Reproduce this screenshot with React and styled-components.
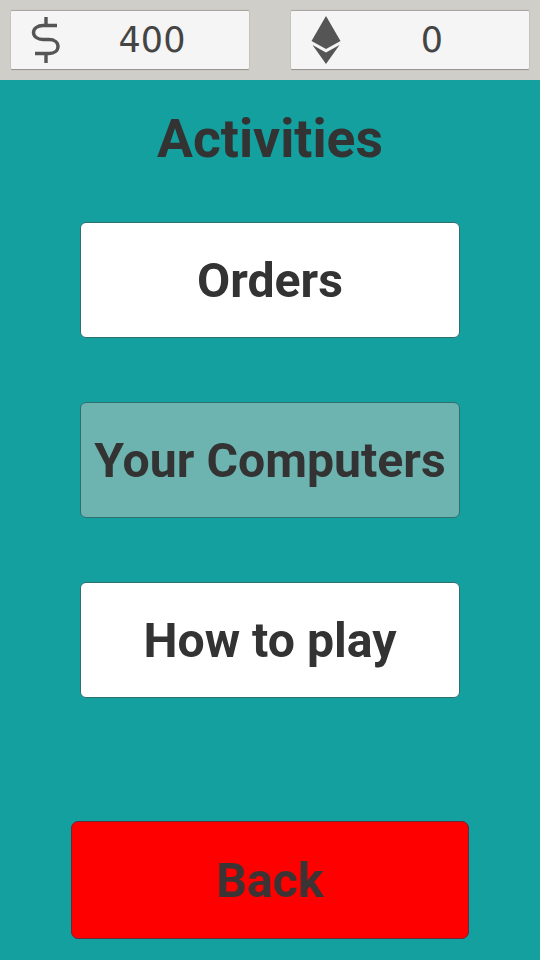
import styled, { createGlobalStyle } from "styled-components";
import React from "react";

const GlobalStyle = createGlobalStyle`
    html, body {
        margin: 0;
        padding: 0;
    }
`

export default function App() {
    return (
        <Screen>
            <GlobalStyle />
            <TopBar>
                <Counter>
                    <CounterIcon>
                        <svg width="32" height="48" viewBox="0 0 32 48" fill="none" stroke="#555555" strokeWidth="3.4">
                            <path d="M16 1v8.500M16 37.500V47" />
                            <path d="M27 9.500H13C7.500 9.500 3.500 12.500 3.500 16.500S7.500 23.500 13 23.500h6C24.500 23.500 28 26.500 28 30.500S24.500 37.500 19 37.500H5" />
                        </svg>
                    </CounterIcon>
                    <CounterValue>400</CounterValue>
                </Counter>
                <Counter>
                    <CounterIcon>
                        <svg width="32" height="48" viewBox="0 0 32 48" fill="#555555">
                            <path d="M16 0L30.500 25L16 33L1.500 25Z" />
                            <path d="M2.500 29L16 36.500L29.500 29L16 48Z" />
                        </svg>
                    </CounterIcon>
                    <CounterValue>0</CounterValue>
                </Counter>
            </TopBar>
            <Content>
                <Title>Activities</Title>
                <Menu>
                    <MenuButton>Orders</MenuButton>
                    <MenuButton disabled>Your Computers</MenuButton>
                    <MenuButton>How to play</MenuButton>
                </Menu>
                <BackButton>Back</BackButton>
            </Content>
        </Screen>
    )
}

const Screen = styled.div`

    width: 540px;
    height: 960px;
    display: flex;
    flex-direction: column;
    background-color: #13a09e;
    font-family: Roboto, "Liberation Sans", sans-serif;
    overflow: hidden;

`

const TopBar = styled.div`

    height: 80px;
    box-sizing: border-box;
    padding: 11px;
    display: flex;
    justify-content: space-between;
    background-color: #cfcec8;

`

const Counter = styled.div`

    width: 238px;
    height: 58px;
    box-sizing: border-box;
    display: flex;
    align-items: center;
    background-color: #f5f5f5;
    border-radius: 1px;
    box-shadow: 0 1px 1px rgba(0, 0, 0, 0.3), 0 -1px 1px rgba(0, 0, 0, 0.2);

`

const CounterIcon = styled.div`

    width: 32px;
    height: 48px;
    margin-left: 19px;
    flex-shrink: 0;

`

const CounterValue = styled.span`

    flex: 1;
    padding-right: 7px;
    text-align: center;
    font-family: "DejaVu Sans", sans-serif;
    font-size: 35px;
    color: #444444;

`

const Content = styled.div`

    flex: 1;
    display: flex;
    flex-direction: column;
    align-items: center;

`

const Title = styled.h1`

    margin: 28px 0 0;
    height: 62px;
    line-height: 62px;
    font-size: 53.5px;
    font-weight: 700;
    color: #333333;

`

const Menu = styled.div`

    margin-top: 52px;
    display: flex;
    flex-direction: column;
    gap: 64px;

`

const MenuButton = styled.button`

    width: 380px;
    height: 116px;
    box-sizing: border-box;
    padding: 0;
    border: 1px solid #2c7070;
    border-radius: 6px;
    background-color: ${props => props.disabled ? "#6db3b0" : "#ffffff"};
    font-family: inherit;
    font-size: 48.2px;
    font-weight: 700;
    color: #333333;

`

const BackButton = styled.button`

    width: 398px;
    height: 118px;
    box-sizing: border-box;
    margin-top: 123px;
    padding: 0;
    border: 1px solid #6a2a3a;
    border-radius: 7px;
    background-color: #ff0000;
    font-family: inherit;
    font-size: 48.2px;
    font-weight: 700;
    color: #3c3434;

`
